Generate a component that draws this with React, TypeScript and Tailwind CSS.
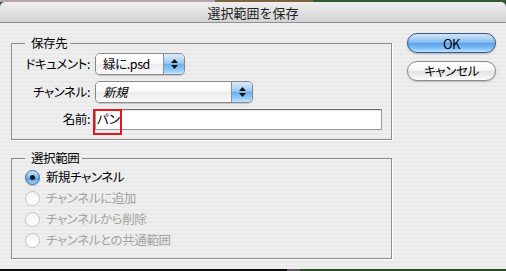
import React from "react";

function Arrows() {
  return (
    <div className="flex flex-col items-center gap-[2px]">
      <svg width="7" height="4" viewBox="0 0 7 4">
        <path d="M3.5 0 L7 4 L0 4 Z" fill="#111" />
      </svg>
      <svg width="7" height="4" viewBox="0 0 7 4">
        <path d="M0 0 L7 0 L3.5 4 Z" fill="#111" />
      </svg>
    </div>
  );
}

function Popup({ wide, italic, children }: { wide?: boolean; italic?: boolean; children: React.ReactNode }) {
  return (
    <div
      className={
        (wide ? "w-[158px]" : "w-[90px]") +
        " h-[22px] shrink-0 flex rounded-[5px] border border-[#8a8a8a] overflow-hidden shadow-[0_1px_1px_rgba(0,0,0,0.18)]"
      }
    >
      <div
        className={
          "flex-1 flex items-center pl-[7px] leading-none whitespace-nowrap bg-[linear-gradient(to_bottom,#ffffff,#f7f7f7_50%,#ececec_52%,#fafafa)] " +
          (italic ? "italic" : "")
        }
      >
        {children}
      </div>
      <div className="w-[21px] flex items-center justify-center border-l border-[#7d93b3] bg-[linear-gradient(to_bottom,#dcecfb,#9fcaf3_45%,#6eafee_52%,#8fc8f8_80%,#c4e6ff)]">
        <Arrows />
      </div>
    </div>
  );
}

function Radio({ selected, label }: { selected?: boolean; label: string }) {
  return (
    <div className="h-[21px] flex items-center pl-[13px] gap-[6px]">
      {selected ? (
        <div className="w-[15px] h-[15px] shrink-0 rounded-full border border-[#4d6890] flex items-center justify-center bg-[linear-gradient(to_bottom,#cfe4fa,#7db7ef_50%,#4f9ce8_55%,#9fd3fb)] shadow-[0_1px_1px_rgba(0,0,0,0.2)]">
          <div className="w-[5px] h-[5px] rounded-full bg-[#111a2a]" />
        </div>
      ) : (
        <div className="w-[15px] h-[15px] shrink-0 rounded-full border border-[#c4c4c4] bg-[linear-gradient(to_bottom,#f2f2f2,#fbfbfb_60%,#ffffff)]" />
      )}
      <span className={selected ? "text-black leading-none whitespace-nowrap" : "text-[#a3a3a3] leading-none whitespace-nowrap"}>
        {label}
      </span>
    </div>
  );
}

export default function App() {
  return (
    <div className="w-[506px] h-[271px] flex flex-col overflow-hidden font-['Noto_Sans_CJK_JP','Noto_Sans',sans-serif] [font-feature-settings:'palt'] text-[12.5px] tracking-[-0.4px] text-black bg-[#2f5a32]">
      {/* desktop strip */}
      <div className="h-[2px] shrink-0 flex">
        <div className="w-[215px] bg-[#b9a5b0]" />
        <div className="w-[98px] bg-[#7e6645]" />
        <div className="flex-1 bg-[#2f5a32]" />
      </div>

      {/* title bar */}
      <div className="h-[21px] shrink-0 rounded-t-[5px] border-b border-[#8e8e8e] bg-[linear-gradient(to_bottom,#efefef,#d2d2d2)] flex items-center justify-center text-[13px] tracking-normal leading-none text-[#222] [font-feature-settings:normal]">
        選択範囲を保存
      </div>

      {/* body */}
      <div className="flex-1 flex bg-[repeating-linear-gradient(to_bottom,#efefef_0px,#efefef_2px,#e9e9e9_2px,#e9e9e9_4px)]">
        {/* left column */}
        <div className="w-[392px] pl-[11px] pt-[11px] flex flex-col">
          <fieldset className="w-[381px] border border-[#8c8c8c] shadow-[1px_1px_0_#ffffff]">
            <legend className="ml-[13px] pl-[6px] pr-[3px] leading-[18px]">保存先</legend>
            <div className="pt-[1px] pb-[9px] flex flex-col gap-[6px]">
              <div className="h-[22px] flex items-center">
                <span className="w-[78px] shrink-0 mr-[5px] text-right leading-none whitespace-nowrap">ドキュメント:</span>
                <Popup>緑に.psd</Popup>
              </div>
              <div className="h-[22px] flex items-center">
                <span className="w-[78px] shrink-0 mr-[5px] text-right leading-none whitespace-nowrap">チャンネル:</span>
                <Popup wide italic>
                  新規
                </Popup>
              </div>
              <div className="h-[21px] flex items-center">
                <span className="w-[78px] shrink-0 mr-[5px] text-right leading-none whitespace-nowrap">名前:</span>
                <div className="relative w-[287px] h-[21px] shrink-0 bg-white border border-[#9b9b9b] border-t-[#707070] shadow-[inset_0_1px_1px_rgba(0,0,0,0.12)] flex items-center pl-[1px] leading-none">
                  パン
                  <div className="absolute left-[-3px] top-[-1px] w-[29px] h-[26px] border-2 border-[#e8141b]" />
                </div>
              </div>
            </div>
          </fieldset>

          <fieldset className="mt-[9px] w-[381px] border border-[#8c8c8c] shadow-[1px_1px_0_#ffffff]">
            <legend className="ml-[13px] pl-[6px] pr-[3px] leading-[18px]">選択範囲</legend>
            <div className="pb-[7px] flex flex-col">
              <Radio selected label="新規チャンネル" />
              <Radio label="チャンネルに追加" />
              <Radio label="チャンネルから削除" />
              <Radio label="チャンネルとの共通範囲" />
            </div>
          </fieldset>
        </div>

        {/* right column */}
        <div className="pl-[15px] pt-[10px] flex flex-col gap-[8px]">
          <div className="w-[89px] h-[20px] rounded-full border border-[#3a578c] flex items-center justify-center leading-none text-[13px] bg-[linear-gradient(to_bottom,#d3e6fa,#8cc0f1_45%,#5aa2ea_52%,#7fc0f6_80%,#bfe4ff)] shadow-[0_1px_2px_rgba(0,0,0,0.25)]">
            OK
          </div>
          <div className="w-[89px] h-[20px] rounded-full border border-[#8a8a8a] flex items-center justify-center leading-none bg-[linear-gradient(to_bottom,#ffffff,#f6f6f6_45%,#e4e4e4_52%,#f0f0f0_80%,#ffffff)] shadow-[0_1px_2px_rgba(0,0,0,0.2)]">
            キャンセル
          </div>
        </div>
      </div>

      {/* bottom strip */}
      <div className="h-[2px] shrink-0 flex">
        <div className="w-[287px] bg-[#0a0a0a]" />
        <div className="w-[13px] bg-[#5a5a5a]" />
        <div className="flex-1 bg-[#2b4a28]" />
      </div>
    </div>
  );
}
